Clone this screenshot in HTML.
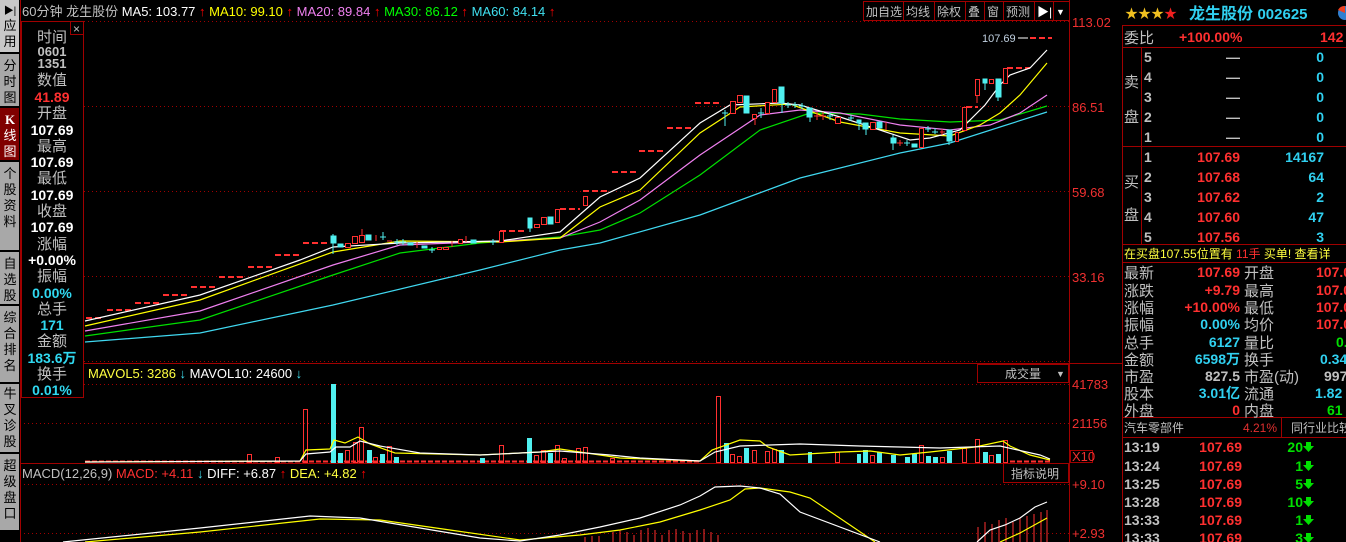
<!DOCTYPE html>
<html><head><meta charset="utf-8"><style>
body{margin:0;background:#000;width:1346px;height:542px;overflow:hidden;position:relative;font-family:"Liberation Sans","Noto Sans CJK SC",sans-serif}
svg{position:absolute;left:0;top:0}
</style></head><body>
<svg width="1346" height="542" viewBox="0 0 1346 542" font-family="Liberation Sans, Noto Sans CJK SC, sans-serif">
<rect x="0" y="0" width="20" height="542" fill="#000"/>
<g font-size="13" fill="#000" text-anchor="middle">
<rect x="0" y="0" width="19" height="52" fill="#c8c8c8"/>
<text x="10" y="14" font-size="10">▶|</text><text x="10" y="30">应</text><text x="10" y="46">用</text>
<rect x="0" y="54" width="19" height="52" fill="#a8a8a8"/>
<text x="10" y="70">分</text><text x="10" y="86">时</text><text x="10" y="102">图</text>
<rect x="0" y="108" width="19" height="52" fill="#800000"/>
<text x="10" y="124" fill="#fff" font-weight="bold" font-family="Liberation Serif">K</text><text x="10" y="140" fill="#fff">线</text><text x="10" y="156" fill="#fff">图</text>
<rect x="0" y="162" width="19" height="88" fill="#a8a8a8"/>
<text x="10" y="178">个</text><text x="10" y="194">股</text><text x="10" y="210">资</text><text x="10" y="226">料</text>
<rect x="0" y="252" width="19" height="52" fill="#a8a8a8"/>
<text x="10" y="268">自</text><text x="10" y="284">选</text><text x="10" y="300">股</text>
<rect x="0" y="306" width="19" height="76" fill="#a8a8a8"/>
<text x="10" y="322">综</text><text x="10" y="338">合</text><text x="10" y="354">排</text><text x="10" y="370">名</text>
<rect x="0" y="384" width="19" height="68" fill="#a8a8a8"/>
<text x="10" y="398">牛</text><text x="10" y="414">叉</text><text x="10" y="430">诊</text><text x="10" y="446">股</text>
<rect x="0" y="454" width="19" height="76" fill="#a8a8a8"/>
<text x="10" y="470">超</text><text x="10" y="486">级</text><text x="10" y="502">盘</text><text x="10" y="518">口</text>
</g>
<g stroke="#a00000" stroke-width="1" fill="none">
<line x1="20.5" y1="0" x2="20.5" y2="542"/>
<line x1="1069.5" y1="0" x2="1069.5" y2="542"/>
<line x1="20" y1="363.5" x2="1122" y2="363.5"/>
<line x1="20" y1="463.5" x2="1069" y2="463.5"/>
<line x1="1122.5" y1="25" x2="1122.5" y2="542"/>
</g>
<g stroke="#a00000" stroke-dasharray="1,3" stroke-width="1">
<line x1="84" y1="21.5" x2="1069" y2="21.5"/>
<line x1="84" y1="106.5" x2="1069" y2="106.5"/>
<line x1="84" y1="191.5" x2="1069" y2="191.5"/>
<line x1="84" y1="276.5" x2="1069" y2="276.5"/>
<line x1="84" y1="361.5" x2="1069" y2="361.5"/>
<line x1="20" y1="384.5" x2="1069" y2="384.5"/>
<line x1="20" y1="423.5" x2="1069" y2="423.5"/>
<line x1="20" y1="484.5" x2="1069" y2="484.5"/>
<line x1="20" y1="533.5" x2="1069" y2="533.5"/>
</g>
<text x="22" y="16" font-size="13" fill="#c0c0c0">60分钟  龙生股份 <tspan fill="#fff">MA5: 103.77</tspan><tspan fill="#f00" font-weight="bold"> ↑</tspan> <tspan fill="#ff0">MA10: 99.10</tspan><tspan fill="#f00" font-weight="bold"> ↑</tspan> <tspan fill="#f080f0">MA20: 89.84</tspan><tspan fill="#f00" font-weight="bold"> ↑</tspan> <tspan fill="#0f0">MA30: 86.12</tspan><tspan fill="#f00" font-weight="bold"> ↑</tspan> <tspan fill="#40e0f0">MA60: 84.14</tspan><tspan fill="#f00" font-weight="bold"> ↑</tspan></text>
<g font-size="12" fill="#c0c0c0">
<rect x="863.5" y="1.5" width="40" height="19" fill="none" stroke="#a00000"/><text x="866" y="16">加自选</text>
<rect x="903.5" y="1.5" width="31" height="19" fill="none" stroke="#a00000"/><text x="906" y="16">均线</text>
<rect x="934.5" y="1.5" width="31" height="19" fill="none" stroke="#a00000"/><text x="937" y="16">除权</text>
<rect x="965.5" y="1.5" width="19" height="19" fill="none" stroke="#a00000"/><text x="968" y="16">叠</text>
<rect x="984.5" y="1.5" width="19" height="19" fill="none" stroke="#a00000"/><text x="987" y="16">窗</text>
<rect x="1003.5" y="1.5" width="31" height="19" fill="none" stroke="#a00000"/><text x="1006" y="16">预测</text>
<rect x="1034.5" y="1.5" width="19" height="19" fill="none" stroke="#a00000"/><text x="1037" y="16" fill="#fff">▶|</text>
<rect x="1053.5" y="1.5" width="16" height="19" fill="none" stroke="#a00000"/><text x="1056" y="15" font-size="9" fill="#fff">▼</text>
</g>
<g font-size="13" fill="#f03030">
<text x="1072" y="27">113.02</text><text x="1072" y="112">86.51</text><text x="1072" y="197">59.68</text><text x="1072" y="282">33.16</text>
<text x="1072" y="389">41783</text><text x="1072" y="428">21156</text>
<rect x="1070.5" y="450.5" width="22" height="12" fill="none" stroke="#a00000"/><text x="1072" y="461">X10</text>
<text x="1072" y="489">+9.10</text><text x="1072" y="538">+2.93</text>
</g>
<rect x="21.5" y="21.5" width="62" height="376" fill="#000" stroke="#a00000"/>
<rect x="70.5" y="21.5" width="13" height="13" fill="none" stroke="#a00000"/>
<text x="73" y="33" font-size="12" fill="#c0c0c0">×</text>
<g font-size="15" text-anchor="middle" fill="#c0c0c0">
<text x="52" y="42">时间</text>
<text x="52" y="56" font-size="13" font-weight="bold">0601</text>
<text x="52" y="68" font-size="13" font-weight="bold">1351</text>
<text x="52" y="85">数值</text>
<text x="52" y="102" font-size="14" font-weight="bold" fill="#ff3030">41.89</text>
<text x="52" y="118">开盘</text>
<text x="52" y="135" font-size="14" font-weight="bold" fill="#fff">107.69</text>
<text x="52" y="151">最高</text>
<text x="52" y="167" font-size="14" font-weight="bold" fill="#fff">107.69</text>
<text x="52" y="183">最低</text>
<text x="52" y="200" font-size="14" font-weight="bold" fill="#fff">107.69</text>
<text x="52" y="216">收盘</text>
<text x="52" y="232" font-size="14" font-weight="bold" fill="#fff">107.69</text>
<text x="52" y="249">涨幅</text>
<text x="52" y="265" font-size="14" font-weight="bold" fill="#fff">+0.00%</text>
<text x="52" y="281">振幅</text>
<text x="52" y="298" font-size="14" font-weight="bold" fill="#30d8f0">0.00%</text>
<text x="52" y="314">总手</text>
<text x="52" y="330" font-size="14" font-weight="bold" fill="#30d8f0">171</text>
<text x="52" y="346">金额</text>
<text x="52" y="363" font-size="14" font-weight="bold" fill="#30d8f0">183.6万</text>
<text x="52" y="379">换手</text>
<text x="52" y="395" font-size="14" font-weight="bold" fill="#30d8f0">0.01%</text>
</g>
<g stroke="#ff3030" stroke-width="2" stroke-dasharray="6,3">
<line x1="86" y1="318" x2="103" y2="318"/><line x1="107" y1="310" x2="133" y2="310"/><line x1="135" y1="303" x2="160" y2="303"/>
<line x1="163" y1="295" x2="188" y2="295"/><line x1="191" y1="287" x2="217" y2="287"/><line x1="219" y1="277" x2="245" y2="277"/>
<line x1="248" y1="267" x2="273" y2="267"/><line x1="275" y1="255" x2="300" y2="255"/><line x1="303" y1="243" x2="330" y2="243"/>
<line x1="500" y1="231" x2="527" y2="231"/><line x1="560" y1="209" x2="580" y2="209"/>
<line x1="583" y1="191" x2="608" y2="191"/><line x1="612" y1="172" x2="637" y2="172"/><line x1="639" y1="151" x2="665" y2="151"/>
<line x1="667" y1="128" x2="693" y2="128"/><line x1="695" y1="103" x2="722" y2="103"/>
<line x1="966" y1="107" x2="978" y2="107"/><line x1="1007" y1="68" x2="1030" y2="68"/><line x1="1030" y1="38" x2="1052" y2="38"/>
</g>
<text x="982" y="42" font-size="11" fill="#c0d0e0">107.69</text>
<line x1="1018" y1="38" x2="1028" y2="38" stroke="#fff"/>
<g fill="none" stroke-width="1.2">
<polyline stroke="#40d8f0" points="85,342 200,333 333,305 480,270 560,250 600,243 700,215 800,178 900,153 950,143 1000,127 1047,112"/>
<polyline stroke="#00e000" points="85,336 200,320 333,275 400,253 480,243 560,237 600,230 640,213 700,175 760,130 810,113 860,114 900,119 950,122 1000,120 1047,106"/>
<polyline stroke="#f080f0" points="85,331 200,311 333,265 400,245 480,242 560,238 600,222 640,200 700,155 760,115 800,110 840,113 900,125 950,130 990,125 1020,113 1047,95"/>
<polyline stroke="#ffff00" points="85,326 200,300 333,252 400,241 500,242 560,238 600,207 640,190 700,133 740,107 790,104 840,122 900,133 950,136 980,125 1000,113 1020,95 1047,63"/>
<polyline stroke="#ffffff" points="85,321 200,295 300,260 333,247 400,243 500,241 560,232 600,197 640,178 700,123 730,105 780,103 800,105 840,117 880,130 910,140 930,138 960,130 985,105 1000,85 1010,75 1030,68 1047,50"/>
</g>
<g stroke-width="1">
<g stroke="#ff3030" fill="#000">
<rect x="730.5" y="101.5" width="5" height="12"/><rect x="737.5" y="95.5" width="5" height="7"/><rect x="752.5" y="114.5" width="4" height="4"/>
<rect x="765.5" y="102.5" width="4" height="11"/><rect x="772.5" y="89.5" width="4" height="13"/><rect x="835.5" y="117.5" width="5" height="6"/>
<rect x="870.5" y="122.5" width="5" height="7"/><rect x="919.5" y="128.5" width="4" height="19"/><rect x="955.5" y="132.5" width="3" height="9"/>
<rect x="962.5" y="107.5" width="4" height="23"/><rect x="975.5" y="79.5" width="4" height="16"/><rect x="989.5" y="79.5" width="4" height="4"/>
<rect x="1003.5" y="68.5" width="4" height="15"/>
<rect x="345.5" y="243.5" width="5" height="4"/><rect x="352.5" y="236.5" width="5" height="7"/><rect x="359.5" y="235.5" width="5" height="7"/>
<rect x="437.5" y="247.5" width="4" height="2"/><rect x="443.5" y="247.5" width="5" height="2"/><rect x="458.5" y="239.5" width="4" height="4"/>
<rect x="499.5" y="231.5" width="4" height="11"/><rect x="534.5" y="224.5" width="5" height="3"/><rect x="541.5" y="217.5" width="5" height="7"/>
<rect x="555.5" y="209.5" width="4" height="13"/><rect x="583.5" y="196.5" width="4" height="9"/>
<path d="M755 118v7M977 95v8M362 235v-6M817 112v8M823 112v8M886 122v8M900 140v6M942 129v6M376 235v6M387 241h5M417 242v6M452 241v6M466 236v6M814 116h6M820 116h6M897 143h6M940 132h5" fill="none"/>
</g>
<g fill="#50f0f0" stroke="#50f0f0">
<rect x="744" y="96" width="5" height="17"/><rect x="779" y="87" width="5" height="16"/><rect x="807" y="108" width="5" height="9"/>
<rect x="857" y="120" width="4" height="3"/><rect x="863" y="123" width="5" height="6"/><rect x="877" y="122" width="5" height="6"/>
<rect x="891" y="138" width="5" height="5"/><rect x="912" y="144" width="5" height="3"/><rect x="947" y="130" width="5" height="11"/>
<rect x="983" y="79" width="4" height="4"/><rect x="996" y="79" width="5" height="18"/>
<rect x="331" y="236" width="5" height="7"/><rect x="338" y="244" width="5" height="3"/><rect x="366" y="235" width="5" height="5"/>
<rect x="408" y="243" width="5" height="2"/><rect x="422" y="246" width="5" height="2"/><rect x="471" y="240" width="5" height="3"/>
<rect x="528" y="218" width="4" height="10"/><rect x="548" y="217" width="5" height="7"/>
<path d="M725 110v16M722 113h6M761 108v10M758 113h6M782 103v10M788 102v6M785 105h6M795 102v6M792 105h6M802 103v6M799 106h6M810 117v5M830 112v8M827 116h6M851 115v6M848 118h6M859 123v7M866 129v6M893 135v15M907 140v6M904 143h6M928 126v6M925 129h6M935 128v6M932 132h6M949 141v4M333 234v20M383 232v8M380 237h6M397 239v6M394 242h6M403 239v6M400 242h6M432 247v6M429 250h6M493 239v6M490 242h6M530 228v4M985 83v7M998 97v4" fill="none"/>
</g>
</g>
<text x="88" y="378" font-size="13" fill="#ffff40">MAVOL5: 3286<tspan fill="#40e0f0" font-weight="bold"> ↓</tspan>  <tspan fill="#fff">MAVOL10: 24600</tspan><tspan fill="#40e0f0" font-weight="bold"> ↓</tspan></text>
<rect x="977.5" y="364.5" width="91" height="18" fill="none" stroke="#a00000"/>
<text x="1005" y="378" font-size="12" fill="#c0c0c0">成交量</text><text x="1056" y="377" font-size="9" fill="#c0c0c0">▼</text>
<g stroke="#ff3030" fill="none">
<line x1="85" y1="461.5" x2="700" y2="461.5" stroke-width="2" stroke-dasharray="5,2"/>
<rect x="247.5" y="454.5" width="4" height="8"/><rect x="275.5" y="457.5" width="4" height="5"/><rect x="303.5" y="409.5" width="4" height="53"/>
<rect x="345.5" y="450.5" width="4" height="12"/><rect x="353.5" y="442.5" width="4" height="20"/><rect x="359.5" y="427.5" width="4" height="35"/>
<rect x="373.5" y="457.5" width="4" height="5"/><rect x="387.5" y="446.5" width="4" height="16"/>
<rect x="499.5" y="445.5" width="4" height="17"/><rect x="534.5" y="455.5" width="4" height="7"/><rect x="541.5" y="450.5" width="4" height="12"/><rect x="555.5" y="445.5" width="4" height="17"/><rect x="562.5" y="458.5" width="4" height="4"/><rect x="576.5" y="448.5" width="4" height="14"/><rect x="583.5" y="447.5" width="4" height="15"/><rect x="610.5" y="458.5" width="4" height="4"/>
<rect x="716.5" y="396.5" width="4" height="66"/><rect x="730.5" y="454.5" width="4" height="8"/><rect x="737.5" y="456.5" width="4" height="6"/><rect x="752.5" y="450.5" width="4" height="12"/><rect x="765.5" y="451.5" width="4" height="11"/>
<rect x="772.5" y="449.5" width="4" height="13"/><rect x="835.5" y="452.5" width="4" height="10"/><rect x="870.5" y="455.5" width="4" height="7"/><rect x="919.5" y="445.5" width="4" height="17"/>
<rect x="940.5" y="457.5" width="4" height="5"/><rect x="962.5" y="448.5" width="4" height="14"/><rect x="975.5" y="439.5" width="4" height="23"/><rect x="989.5" y="455.5" width="4" height="7"/><rect x="1003.5" y="440.5" width="4" height="22"/>
<line x1="1010" y1="461.5" x2="1050" y2="461.5" stroke-width="2" stroke-dasharray="5,2"/>
</g>
<g fill="#50f0f0">
<rect x="331" y="384" width="5" height="79"/><rect x="338" y="453" width="5" height="10"/><rect x="367" y="450" width="5" height="13"/><rect x="380" y="454" width="5" height="9"/><rect x="394" y="457" width="5" height="6"/>
<rect x="527" y="438" width="5" height="25"/><rect x="548" y="453" width="5" height="10"/><rect x="480" y="458" width="5" height="5"/>
<rect x="724" y="443" width="5" height="20"/><rect x="744" y="448" width="5" height="15"/><rect x="779" y="450" width="5" height="13"/><rect x="808" y="452" width="4" height="11"/><rect x="857" y="454" width="4" height="9"/><rect x="863" y="450" width="5" height="13"/><rect x="877" y="452" width="5" height="11"/>
<rect x="891" y="455" width="5" height="8"/><rect x="905" y="457" width="5" height="6"/><rect x="912" y="454" width="5" height="9"/><rect x="926" y="456" width="5" height="7"/><rect x="933" y="457" width="5" height="6"/><rect x="947" y="451" width="5" height="12"/><rect x="983" y="452" width="5" height="11"/><rect x="996" y="454" width="5" height="9"/>
</g>
<g fill="none" stroke-width="1.2">
<polyline stroke="#ffff00" points="85,462 300,461 306,450 330,449 334,440 345,443 358,437 370,444 395,453 480,455 540,452 560,449 600,455 620,458 700,461 712,450 740,440 760,441 768,447 790,455 840,452 870,451 900,455 930,452 975,447 1003,441 1010,446 1030,455 1050,460"/>
<polyline stroke="#ffffff" points="85,462 300,461 306,454 330,452 336,447 350,447 360,441 380,446 420,453 480,455 560,451 610,455 640,458 700,461 715,452 740,446 800,444 860,446 900,447 940,448 1000,446 1040,455 1050,459"/>
</g>
<text x="22" y="478" font-size="13" fill="#c0c0c0">MACD(12,26,9) <tspan fill="#ff3030">MACD: +4.11</tspan><tspan fill="#40e0f0" font-weight="bold"> ↓</tspan>  <tspan fill="#fff">DIFF: +6.87</tspan><tspan fill="#f00" font-weight="bold"> ↑</tspan>  <tspan fill="#ffff40">DEA: +4.82</tspan><tspan fill="#f00" font-weight="bold"> ↑</tspan></text>
<rect x="1003.5" y="463.5" width="65" height="19" fill="none" stroke="#a00000"/><text x="1011" y="478" font-size="12" fill="#c0c0c0">指标说明</text>
<g stroke="#ff3030">
<path d="M585 542v-5M592 542v-6M599 542v-6M613 542v-10M620 542v-12M627 542v-10M634 542v-7M641 542v-12M648 542v-14M655 542v-12M662 542v-7M669 542v-12M676 542v-13M683 542v-11M690 542v-9M697 542v-12M704 542v-13M711 542v-10M718 542v-7M978 542v-15M985 542v-20M992 542v-18M999 542v-22M1006 542v-24M1013 542v-20M1020 542v-24M1027 542v-26M1034 542v-28M1041 542v-30M1047 542v-32"/>
</g>
<g fill="none" stroke-width="1.2">
<polyline stroke="#ffff00" points="85,542 200,532 320,519 380,520 450,530 520,540 580,535 620,530 660,522 700,510 730,500 745,489 760,488 790,492 810,498 850,525 875,542"/>
<polyline stroke="#ffff00" points="1000,542 1020,533 1047,518"/>
<polyline stroke="#ffffff" points="63,542 200,528 310,516 360,518 420,528 480,538 520,541 560,535 600,527 640,518 680,505 700,496 715,487 740,486 760,488 780,494 800,512 880,542"/>
<polyline stroke="#ffffff" points="977,542 990,530 1005,525 1020,518 1035,507 1047,502"/>
</g>
<g stroke="#a00000" fill="none">
<line x1="1122" y1="25.5" x2="1346" y2="25.5"/><line x1="1122" y1="47.5" x2="1346" y2="47.5"/>
<line x1="1141.5" y1="47" x2="1141.5" y2="245"/><line x1="1122" y1="146.5" x2="1346" y2="146.5"/>
<line x1="1122" y1="244.5" x2="1346" y2="244.5"/><line x1="1122" y1="262.5" x2="1346" y2="262.5"/>
<line x1="1122" y1="417.5" x2="1346" y2="417.5"/><line x1="1122" y1="437.5" x2="1346" y2="437.5"/><line x1="1281.5" y1="418" x2="1281.5" y2="437"/>
</g>
<text x="1125" y="18" font-size="13" fill="#f0c020">★★★<tspan fill="#f02020">★</tspan></text>
<text x="1189" y="19" font-size="16" font-weight="bold" fill="#30d0f0">龙生股份 <tspan font-size="15">002625</tspan></text>
<circle cx="1345" cy="13" r="7" fill="#3080d0"/><path d="M1345 13L1338 10A7 7 0 0 1 1345 6Z" fill="#f04020"/>
<g font-size="15" fill="#c0c0c0"><text x="1124" y="43">委比</text><text x="1124" y="87">卖</text><text x="1124" y="122">盘</text><text x="1124" y="187">买</text><text x="1124" y="220">盘</text></g>
<g font-size="14" font-weight="bold">
<text x="1179" y="42" fill="#ff3030">+100.00%</text><text x="1320" y="42" fill="#ff3030">142</text>
<g fill="#c0c0c0"><text x="1144" y="62">5</text><text x="1144" y="82">4</text><text x="1144" y="102">3</text><text x="1144" y="122">2</text><text x="1144" y="142">1</text>
<text x="1144" y="162">1</text><text x="1144" y="182">2</text><text x="1144" y="202">3</text><text x="1144" y="222">4</text><text x="1144" y="242">5</text></g>
<g fill="#c0c0c0" text-anchor="end"><text x="1240" y="62">—</text><text x="1240" y="82">—</text><text x="1240" y="102">—</text><text x="1240" y="122">—</text><text x="1240" y="142">—</text></g>
<g fill="#30d0f0" text-anchor="end"><text x="1324" y="62">0</text><text x="1324" y="82">0</text><text x="1324" y="102">0</text><text x="1324" y="122">0</text><text x="1324" y="142">0</text>
<text x="1324" y="162">14167</text><text x="1324" y="182">64</text><text x="1324" y="202">2</text><text x="1324" y="222">47</text><text x="1324" y="242">3</text></g>
<g fill="#ff3030" text-anchor="end"><text x="1240" y="162">107.69</text><text x="1240" y="182">107.68</text><text x="1240" y="202">107.62</text><text x="1240" y="222">107.60</text><text x="1240" y="242">107.56</text></g>
</g>
<text x="1124" y="258" font-size="12" fill="#ffff40">在买盘107.55位置有 <tspan fill="#ff3030">  11手</tspan>   买单! 查看详</text>
<g font-size="15" fill="#c0c0c0">
<text x="1124" y="278">最新</text><text x="1124" y="296">涨跌</text><text x="1124" y="313">涨幅</text><text x="1124" y="330">振幅</text><text x="1124" y="348">总手</text><text x="1124" y="365">金额</text><text x="1124" y="382">市盈</text><text x="1124" y="399">股本</text><text x="1124" y="416">外盘</text>
<text x="1244" y="278">开盘</text><text x="1244" y="296">最高</text><text x="1244" y="313">最低</text><text x="1244" y="330">均价</text><text x="1244" y="348">量比</text><text x="1244" y="365">换手</text><text x="1244" y="382">市盈(动)</text><text x="1244" y="399">流通</text><text x="1244" y="416">内盘</text>
</g>
<g font-size="14" font-weight="bold" text-anchor="end">
<text x="1240" y="277" fill="#ff3030">107.69</text><text x="1240" y="295" fill="#ff3030">+9.79</text><text x="1240" y="312" fill="#ff3030">+10.00%</text><text x="1240" y="329" fill="#30d0f0">0.00%</text><text x="1240" y="347" fill="#30d0f0">6127</text><text x="1240" y="364" fill="#30d0f0">6598万</text><text x="1240" y="381" fill="#c0c0c0">827.5</text><text x="1240" y="398" fill="#30d0f0">3.01亿</text><text x="1240" y="415" fill="#ff3030">0</text>
</g>
<g font-size="14" font-weight="bold">
<text x="1316" y="277" fill="#ff3030">107.0</text><text x="1316" y="295" fill="#ff3030">107.0</text><text x="1316" y="312" fill="#ff3030">107.0</text><text x="1316" y="329" fill="#ff3030">107.0</text><text x="1336" y="347" fill="#00e000">0.</text><text x="1320" y="364" fill="#30d0f0">0.34</text><text x="1324" y="381" fill="#c0c0c0">997</text><text x="1315" y="398" fill="#30d0f0">1.82</text><text x="1327" y="415" fill="#00e000">61</text>
</g>
<text x="1124" y="432" font-size="12" fill="#c0c0c0">汽车零部件</text><text x="1277" y="432" font-size="12" fill="#e03030" text-anchor="end">4.21%</text>
<text x="1291" y="432" font-size="12" fill="#c0c0c0">同行业比较</text>
<g font-size="14" font-weight="bold">
<g fill="#c0c0c0"><text x="1124" y="452">13:19</text><text x="1124" y="471">13:24</text><text x="1124" y="489">13:25</text><text x="1124" y="507">13:28</text><text x="1124" y="525">13:33</text><text x="1124" y="543">13:33</text></g>
<g fill="#ff3030" text-anchor="end"><text x="1242" y="452">107.69</text><text x="1242" y="471">107.69</text><text x="1242" y="489">107.69</text><text x="1242" y="507">107.69</text><text x="1242" y="525">107.69</text><text x="1242" y="543">107.69</text></g>
<g fill="#00e000" text-anchor="end"><text x="1303" y="452">20</text><text x="1303" y="471">1</text><text x="1303" y="489">5</text><text x="1303" y="507">10</text><text x="1303" y="525">1</text><text x="1303" y="543">3</text></g>
<g fill="#00e000"><path d="M1306 442h5v4h3l-5.5 6-5.5-6h3z"/><path d="M1306 461h5v4h3l-5.5 6-5.5-6h3z"/><path d="M1306 479h5v4h3l-5.5 6-5.5-6h3z"/><path d="M1306 497h5v4h3l-5.5 6-5.5-6h3z"/><path d="M1306 515h5v4h3l-5.5 6-5.5-6h3z"/><path d="M1306 533h5v4h3l-5.5 6-5.5-6h3z"/></g>
</g>
</svg>
</body></html>
